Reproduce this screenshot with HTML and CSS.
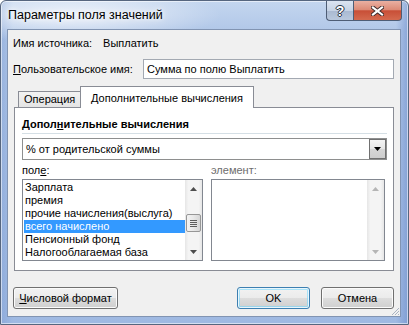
FILE: index.html
```html
<!DOCTYPE html>
<html lang="ru">
<head>
    <meta charset="UTF-8">
    <title>Параметры поля значений</title>
    <link rel="stylesheet" href="styles.css">
</head>
<body>
    <div class="window">
        <div class="titlebar">
            <span class="title">Параметры поля значений</span>
            <div class="caption">
                <span class="cap-help">?</span>
                <span class="cap-close">
                    <svg width="13" height="10" viewBox="0 0 13 10">
                        <path d="M2 1.5 L11 8.5 M11 1.5 L2 8.5" stroke="#3b2a2a" stroke-width="4" stroke-linecap="square"/>
                        <path d="M2 1.5 L11 8.5 M11 1.5 L2 8.5" stroke="#fff" stroke-width="2.2" stroke-linecap="square"/>
                    </svg>
                </span>
            </div>
        </div>

        <div class="client">
            <div class="source">
                <span class="source-label">Имя источника:</span>
                <span>Выплатить</span>
            </div>

            <div class="custom">
                <label><u>П</u>ользовательское имя:</label>
                <div class="textbox">Сумма по полю Выплатить</div>
            </div>

            <div class="tabs">
                <div class="tab">Операция</div>
                <div class="tab active">Дополнительные вычисления</div>
            </div>

            <div class="pane">
                <div class="group-title">Допол<u>н</u>ительные вычисления</div>

                <div class="combo">
                    <span class="combo-text">% от родительской суммы</span>
                    <span class="drop">
                        <svg width="7" height="4" viewBox="0 0 7 4"><path d="M0 0 H7 L3.5 4 Z" fill="#000"/></svg>
                    </span>
                </div>

                <div class="lists">
                    <div class="col col-field">
                        <div class="cap">пол<u>е</u>:</div>
                        <div class="listbox">
                            <div class="items">
                                <div class="item">Зарплата</div>
                                <div class="item">премия</div>
                                <div class="item">прочие начисления(выслуга)</div>
                                <div class="item selected">всего начислено</div>
                                <div class="item">Пенсионный фонд</div>
                                <div class="item">Налогооблагаемая база</div>
                            </div>
                            <div class="scrollbar">
                                <div class="arrow"><svg width="7" height="4" viewBox="0 0 7 4"><path d="M0 4 H7 L3.5 0 Z" fill="#4d4d4d"/></svg></div>
                                <div class="track">
                                    <div class="thumb"><span></span><span></span><span></span><span></span></div>
                                </div>
                                <div class="arrow"><svg width="7" height="4" viewBox="0 0 7 4"><path d="M0 0 H7 L3.5 4 Z" fill="#4d4d4d"/></svg></div>
                            </div>
                        </div>
                    </div>

                    <div class="col col-item">
                        <div class="cap disabled">элемент:</div>
                        <div class="listbox">
                            <div class="items"></div>
                            <div class="scrollbar">
                                <div class="arrow"><svg width="7" height="4" viewBox="0 0 7 4"><path d="M0 4 H7 L3.5 0 Z" fill="#b5b5b5"/></svg></div>
                                <div class="track"></div>
                                <div class="arrow"><svg width="7" height="4" viewBox="0 0 7 4"><path d="M0 0 H7 L3.5 4 Z" fill="#b5b5b5"/></svg></div>
                            </div>
                        </div>
                    </div>
                </div>
            </div>

            <div class="buttons">
                <button class="btn btn-format"><u>Ч</u>исловой формат</button>
                <button class="btn btn-ok">OK</button>
                <button class="btn btn-cancel">Отмена</button>
            </div>

            <!-- уголок для изменения размера -->
            <svg class="grip" width="10" height="10" viewBox="0 0 10 10">
                <path d="M9 2 L2 9 M9 5 L5 9 M9 8 L8 9" stroke="#a9b3c2" stroke-width="1"/>
            </svg>
        </div>
    </div>
</body>
</html>
```

FILE: styles.css
```css
body {
    margin: 0;
    font-family: "Liberation Sans", Arial, sans-serif;
    font-size: 11px;
    color: #000;
}

.window {
    width: 409px;
    height: 325px;
    box-sizing: border-box;
    display: flex;
    flex-direction: column;
    position: relative;
    border: 1px solid #56667f;
    border-radius: 6px 6px 0 0;
    background:
        radial-gradient(ellipse 150px 28px at 70px 14px, rgba(255,255,255,.75), rgba(255,255,255,0)),
        linear-gradient(90deg, rgba(110,145,205,.35) 0, rgba(110,145,205,0) 12px, rgba(110,145,205,0) 395px, rgba(90,125,195,.45) 100%),
        linear-gradient(180deg, #c4d6ef 0, #b1c7e8 30px, #9fb9e2 100%);
    box-shadow: inset 0 0 0 1px rgba(255,255,255,.55);
}

/* заголовок окна */
.titlebar {
    height: 28px;
    display: flex;
    justify-content: space-between;
    align-items: flex-start;
}
.title {
    margin: 6px 0 0 7px;
    font-size: 12.5px;
    line-height: 16px;
    text-shadow: 0 0 8px #fff, 0 0 4px #fff;
}
.caption {
    display: flex;
    margin-right: 6px;
}
.cap-help, .cap-close {
    height: 20px;
    box-sizing: border-box;
    border: 1px solid #4e5d75;
    border-top: none;
    display: flex;
    align-items: center;
    justify-content: center;
}
.cap-help {
    width: 27px;
    border-right: none;
    border-radius: 0 0 0 4px;
    background: linear-gradient(180deg, #dbe4f1 0, #c6d3e5 50%, #a9b9d1 51%, #b9c8dd 100%);
    color: #fff;
    font-weight: bold;
    font-size: 14px;
    text-shadow: 0 0 1px #2c3646, 1px 0 0 #2c3646, -1px 0 0 #2c3646, 0 1px 0 #2c3646, 0 -1px 0 #2c3646;
}
.cap-close {
    width: 49px;
    border-radius: 0 0 4px 0;
    background: linear-gradient(180deg, #eab0a2 0, #dd8b77 45%, #c84f37 52%, #d46a4f 100%);
}

/* клиентская область */
.client {
    flex: 1;
    margin: 0 7px 7px 6px;
    border: 1px solid #8194b2;
    background: #f0f0f0;
    display: flex;
    flex-direction: column;
    position: relative;
}

.source {
    margin-top: 6px;
    padding-left: 5px;
    line-height: 14px;
}
.source-label {
    display: inline-block;
    width: 87px;
}

.custom {
    margin-top: 9px;
    padding: 0 6px 0 5px;
    display: flex;
    align-items: center;
}
.textbox {
    margin-left: auto;
    width: 251px;
    height: 20px;
    box-sizing: border-box;
    border: 1px solid #a3a9b2;
    background: #fff;
    padding-left: 3px;
    line-height: 18px;
}

/* вкладки */
.tabs {
    margin-top: 7px;
    height: 21px;
    padding-left: 10px;
    display: flex;
    align-items: flex-end;
}
.tab {
    box-sizing: border-box;
    border: 1px solid #898c95;
    border-bottom: none;
    line-height: 14px;
}
.tab:first-child {
    width: 64px;
    height: 16px;
    padding-left: 5px;
    background: linear-gradient(180deg, #f2f2f2 0, #e4e4e4 100%);
}
.tab.active {
    width: 174px;
    height: 22px;
    margin: 0 0 -1px -2px;
    padding: 4px 0 0 10px;
    background: #fff;
    position: relative;
    z-index: 1;
}

.pane {
    margin: 0 6px;
    height: 164px;
    box-sizing: border-box;
    border: 1px solid #898c95;
    background: #fff;
    padding: 9px 6px 0 7px;
}
.group-title {
    font-weight: bold;
    line-height: 14px;
    padding-bottom: 2px;
    border-bottom: 1px solid #d5dfe5;
}

.combo {
    margin-top: 4px;
    height: 22px;
    box-sizing: border-box;
    border: 1px solid #8e8f8f;
    display: flex;
    align-items: center;
}
.combo-text {
    padding-left: 3px;
}
.drop {
    margin-left: auto;
    width: 17px;
    height: 20px;
    box-sizing: border-box;
    border: 1px solid #707070;
    background: linear-gradient(180deg, #f4f4f4 0, #e6e6e6 50%, #d6d6d6 51%, #cdcdcd 100%);
    display: flex;
    align-items: center;
    justify-content: center;
}

.lists {
    display: flex;
    gap: 8px;
}
.col-field { width: 181px; }
.col-item { width: 174px; }
.cap {
    margin-top: 3px;
    line-height: 14px;
    margin-bottom: 2px;
}
.cap.disabled { color: #6d6d6d; }

.listbox {
    height: 82px;
    box-sizing: border-box;
    border: 1px solid #828790;
    display: flex;
}
.items {
    flex: 1;
    padding-top: 1px;
}
.item {
    line-height: 13px;
    margin-left: 1px;
    padding-left: 1px;
    white-space: nowrap;
}
.item.selected {
    background: #3399ff;
    color: #fff;
}

.scrollbar {
    width: 17px;
    display: flex;
    flex-direction: column;
    background: linear-gradient(90deg, #e6e6e6 0, #f4f4f4 20%, #f4f4f4 80%, #e6e6e6 100%);
}
.arrow {
    height: 17px;
    display: flex;
    align-items: center;
    justify-content: center;
}
.track {
    flex: 1;
    padding-top: 17px;
}
.thumb {
    margin: 0 1px;
    height: 18px;
    box-sizing: border-box;
    border: 1px solid #979797;
    border-radius: 2px;
    background: linear-gradient(90deg, #f3f3f3 0, #e8e8e8 50%, #d6d6d6 100%);
    display: flex;
    flex-direction: column;
    align-items: center;
    justify-content: center;
    gap: 1px;
}
.thumb span {
    width: 7px;
    height: 1px;
    background: #5e5e5e;
}

/* кнопки */
.buttons {
    margin-top: 16px;
    padding: 0 6px 0 5px;
    display: flex;
}
.btn {
    height: 22px;
    box-sizing: border-box;
    border: 1px solid #707070;
    border-radius: 3px;
    background: linear-gradient(180deg, #f2f2f2 0, #ebebeb 50%, #dddddd 51%, #cfcfcf 100%);
    box-shadow: inset 0 0 0 1px #fbfbfb;
    font-family: "Liberation Sans", Arial, sans-serif;
    font-size: 11px;
    color: #000;
    padding: 0;
}
.btn-format { width: 105px; }
.btn-ok {
    width: 73px;
    margin-left: auto;
    border-color: #3c7fb1;
    box-shadow: inset 0 0 0 1px #e8f6fd, inset 0 0 0 2px rgba(110,215,255,.55);
}
.btn-cancel {
    width: 73px;
    margin-left: 11px;
}

.grip {
    position: absolute;
    right: 0;
    bottom: 0;
}
```
